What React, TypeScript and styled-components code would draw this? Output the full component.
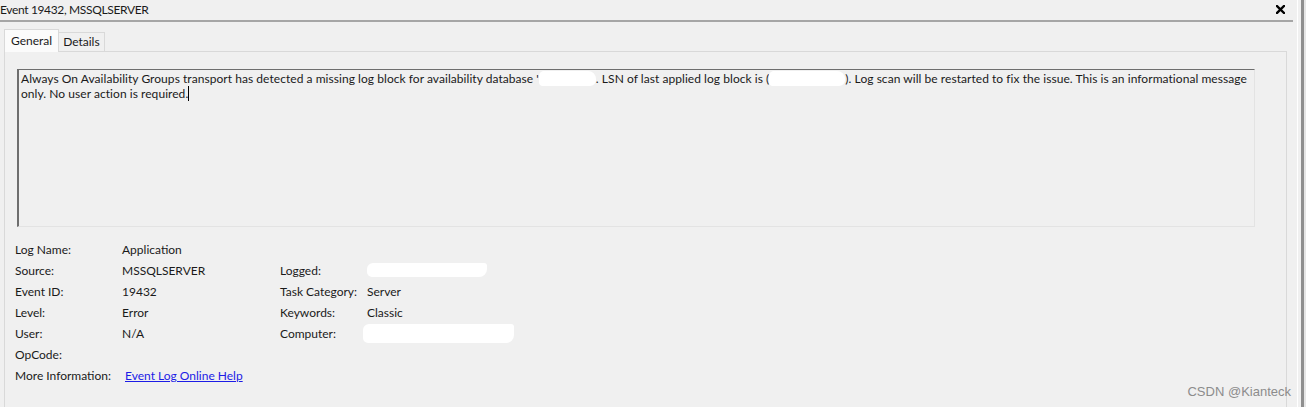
import React from "react";
import styled, { createGlobalStyle } from "styled-components";

const Global = createGlobalStyle`
  html, body { margin: 0; padding: 0; background: #f0f0f0; }
  body {
    width: 1306px; height: 407px; overflow: hidden;
    font-family: Lato, "Noto Sans", sans-serif;
    font-size: 12px; color: #1a1a1a;
  }
`;

const Frame = styled.div`
  position: relative;
  display: flex;
  width: 1306px;
  height: 407px;
  background: #f0f0f0;
  overflow: hidden;
`;

const Main = styled.div`
  width: 1297px;
  display: flex;
  flex-direction: column;
`;

const Rail = styled.div`
  flex: 1;
  border-left: 1px solid #ffffff;
  box-shadow: inset -2px 0 0 #e6e6e6, inset -5px 0 0 #8f8f8f;
`;

const TitleBar = styled.div`
  height: 20px;
  line-height: 20px;
  margin-right: 4px;
  border-bottom: 2px solid #a6a6a6;
  display: flex;
  align-items: center;
  justify-content: space-between;
  white-space: nowrap;
`;

const TitleText = styled.span`
  letter-spacing: -0.35px;
`;

const CloseBtn = styled.span`
  display: flex;
  width: 9px;
  height: 9px;
  margin-right: 8px;
  margin-top: -1px;
`;

const TabStrip = styled.div`
  height: 29px;
  padding-left: 4px;
  display: flex;
  align-items: flex-end;
`;

const Tab = styled.div<{ $active?: boolean }>`
  position: relative;
  z-index: ${(p) => (p.$active ? 1 : 0)};
  box-sizing: border-box;
  height: ${(p) => (p.$active ? 23 : 19)}px;
  margin-bottom: ${(p) => (p.$active ? -1 : 0)}px;
  padding: ${(p) => (p.$active ? "3px 6px 0 6px" : "1px 4px 0 4px")};
  line-height: 15px;
  border: 1px solid #d9d9d9;
  border-bottom: none;
  border-left-width: ${(p) => (p.$active ? 1 : 0)}px;
  background: ${(p) => (p.$active ? "#fbfbfb" : "#f0f0f0")};
  white-space: nowrap;
`;

const Panel = styled.div`
  flex: 1;
  margin: 0 10px 0 4px;
  padding: 17px 10px 0 10px;
  border: 1px solid #d9d9d9;
  border-bottom: none;
  background: #f0f0f0;
`;

const TextBox = styled.div`
  box-sizing: border-box;
  width: 1238px;
  height: 158px;
  margin-left: 2px;
  padding: 1px 2px;
  border-top: 1px solid #6e6e6e;
  border-left: 2px solid #6e6e6e;
  border-right: 1px solid #e3e3e3;
  border-bottom: 1px solid #e3e3e3;
  line-height: 15px;
  letter-spacing: 0.05px;
  white-space: nowrap;
`;

const Line = styled.div``;

const Redact = styled.span<{ $w: number; $h?: number }>`
  display: inline-block;
  width: ${(p) => p.$w}px;
  height: ${(p) => p.$h ?? 15}px;
  background: #ffffff;
  border-radius: 5px 8px 6px 4px;
  vertical-align: -3px;
`;

const Caret = styled.span`
  display: inline-block;
  width: 1px;
  height: 15px;
  background: #000;
  vertical-align: -3px;
`;

const Details = styled.div`
  margin-top: 12px;
  display: grid;
  grid-template-columns: 107px 158px 87px 1fr;
  grid-auto-rows: 21px;
  line-height: 21px;
  white-space: nowrap;
`;

const Label = styled.div``;
const Value = styled.div``;

const BlobCell = styled.div<{ $dx: number; $dy: number }>`
  display: flex;
  align-items: center;
  margin-left: ${(p) => p.$dx}px;
  margin-top: ${(p) => p.$dy}px;
`;

const Blob = styled.span<{ $w: number; $h: number }>`
  display: block;
  width: ${(p) => p.$w}px;
  height: ${(p) => p.$h}px;
  background: #ffffff;
  border-radius: 6px 3px 8px 5px;
`;

const HelpLink = styled.a`
  margin-left: 3px;
  color: #1c1ce6;
  text-decoration: underline;
`;

const Watermark = styled.div`
  position: absolute;
  right: 15px;
  bottom: 8px;
  font-family: "Liberation Sans", Arial, sans-serif;
  font-size: 13px;
  color: #8c8c8c;
  white-space: nowrap;
`;

export default function App() {
  return (
    <>
      <Global />
      <Frame>
        <Main>
          <TitleBar>
            <TitleText>Event 19432, MSSQLSERVER</TitleText>
            <CloseBtn>
              <svg width="9" height="9" viewBox="0 0 9 9">
                <path d="M1 1 L8 8 M8 1 L1 8" stroke="#000" strokeWidth="2.4" strokeLinecap="square" />
              </svg>
            </CloseBtn>
          </TitleBar>
          <TabStrip>
            <Tab $active>General</Tab>
            <Tab>Details</Tab>
          </TabStrip>
          <Panel>
            <TextBox>
              <Line>
                Always On Availability Groups transport has detected a missing log block for availability database '
                <Redact $w={57} />. LSN of last applied log block is (<Redact $w={76} />). Log scan will be restarted to fix the issue. This is an informational message
              </Line>
              <Line>
                only. No user action is required.
                <Caret />
              </Line>
            </TextBox>
            <Details>
              <Label>Log Name:</Label>
              <Value>Application</Value>
              <Label />
              <Value />

              <Label>Source:</Label>
              <Value>MSSQLSERVER</Value>
              <Label>Logged:</Label>
              <BlobCell $dx={0} $dy={-1}>
                <Blob $w={120} $h={14} />
              </BlobCell>

              <Label>Event ID:</Label>
              <Value>19432</Value>
              <Label>Task Category:</Label>
              <Value>Server</Value>

              <Label>Level:</Label>
              <Value>Error</Value>
              <Label>Keywords:</Label>
              <Value>Classic</Value>

              <Label>User:</Label>
              <Value>N/A</Value>
              <Label>Computer:</Label>
              <BlobCell $dx={-4} $dy={0}>
                <Blob $w={151} $h={19} />
              </BlobCell>

              <Label>OpCode:</Label>
              <Value />
              <Label />
              <Value />

              <Label>More Information:</Label>
              <Value>
                <HelpLink href="#">Event Log Online Help</HelpLink>
              </Value>
            </Details>
          </Panel>
        </Main>
        <Rail />
        <Watermark>CSDN @Kianteck</Watermark>
      </Frame>
    </>
  );
}
